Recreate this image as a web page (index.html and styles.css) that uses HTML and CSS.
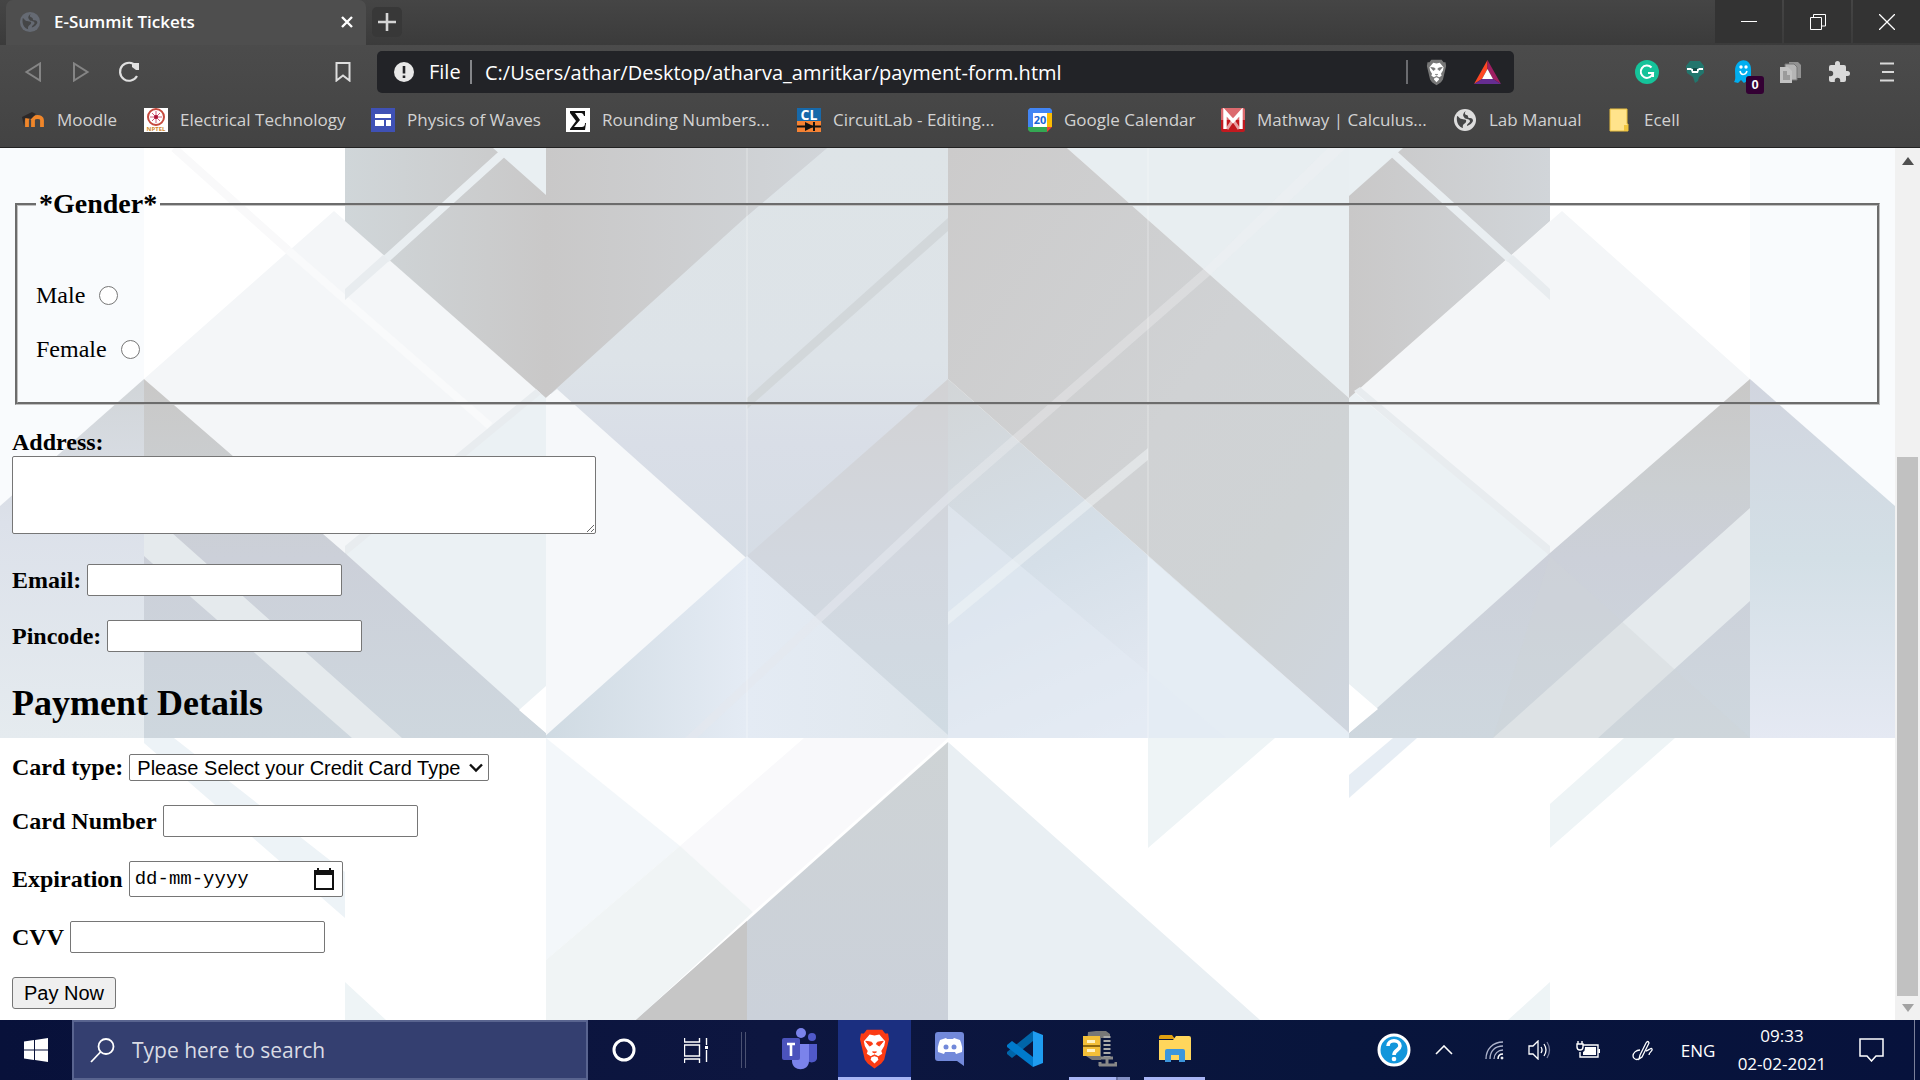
FILE: index.html
```html
<!DOCTYPE html>
<html lang="en">
<head>
<meta charset="utf-8">
<title>E-Summit Tickets</title>
<link rel="stylesheet" href="styles.css">
</head>
<body>
<svg class="defs" aria-hidden="true">
  <symbol id="globe" viewBox="0 0 24 24"><circle cx="12" cy="12" r="11" fill="currentColor"/><path d="M4 8c2 0 2 3 5 3 3 1 5 0 4 3-1 2-4 2-3 6-4-1-7-5-6-12zM13 3c-2 2-1 4 1 4 2 1 0 3 3 3 2 0 3 1 3 3-1 2-3 4-6 5 0-3 3-3 3-5-1-3-5-1-6-4-2-2 0-5 2-6z" class="globe-land"/></symbol>
  <symbol id="lion" viewBox="0 0 32 42"><path d="M8 1h16l3 4 3 0 1 6-1 4-4 17-3 4-7 5-7-5-3-4L2 15l-1-4 1-6h3z" fill="currentColor"/><path d="M16 7l5-1 6 7-1 5-3 5 1 3-5 3 1 3-4 4-4-4 1-3-5-3 1-3-3-5-1-5 6-7z" fill="#fff"/><path d="M7 13l6 1 1 2-3 2zM25 13l-6 1-1 2 3 2zM14 24l2 1 2-1zM12 29l4-2 4 2-4-1z" fill="currentColor" stroke="currentColor" stroke-width="1"/></symbol>
</svg>

<header class="browser">
  <div class="tabstrip">
    <div class="tab">
      <svg class="tab-globe" viewBox="0 0 24 24"><use href="#globe"/></svg>
      <span class="tab-title">E-Summit Tickets</span>
      <button class="plain tab-close" aria-label="Close tab"><svg width="14" height="14" viewBox="0 0 14 14"><path d="M2 2l10 10M12 2L2 12" stroke="#fff" stroke-width="2.4"/></svg></button>
    </div>
    <button class="plain new-tab" aria-label="New tab"><svg width="20" height="20" viewBox="0 0 20 20"><path d="M10 1v18M1 10h18" stroke="#d5d5d5" stroke-width="2.6"/></svg></button>
    <div class="window-buttons">
      <button class="plain" aria-label="Minimise"><svg width="16" height="16" viewBox="0 0 16 16"><path d="M0 7.500h16" stroke="#fff"/></svg></button>
      <button class="plain" aria-label="Restore"><svg width="16" height="16" viewBox="0 0 16 16" fill="none" stroke="#fff"><path d="M.5 3.500h11v12h-11zM3.500 3V.500h12v11.500H12"/></svg></button>
      <button class="plain" aria-label="Close window"><svg width="16" height="16" viewBox="0 0 16 16"><path d="M0 0l16 16M16 0L0 16" stroke="#fff" stroke-width="1.300"/></svg></button>
    </div>
  </div>

  <div class="toolbar">
    <nav class="navigation">
      <button class="plain tool" aria-label="Back"><svg width="18" height="20" viewBox="0 0 18 20"><path d="M16 1.500v17L2.500 10z" fill="none" stroke="#858585" stroke-width="2"/></svg></button>
      <button class="plain tool" aria-label="Forward"><svg width="18" height="20" viewBox="0 0 18 20"><path d="M2 1.500v17L15.500 10z" fill="none" stroke="#858585" stroke-width="2"/></svg></button>
      <button class="plain tool" aria-label="Reload"><svg width="22" height="22" viewBox="0 0 22 22"><path d="M18 5A9 9 0 1 0 19 15" fill="none" stroke="#e0e0e0" stroke-width="2.200"/><path d="M14 2h7v7h-3l-4-3z" fill="#e0e0e0"/></svg></button>
      <button class="plain tool save" aria-label="Bookmark"><svg width="16" height="20" viewBox="0 0 16 20"><path d="M1.500 1h13v17.500L8 13.500l-6.500 5z" fill="none" stroke="#dedede" stroke-width="2"/></svg></button>
    </nav>
    <div class="address">
      <svg width="20" height="20" viewBox="0 0 20 20"><circle cx="10" cy="10" r="10" fill="#e8e8e8"/><path d="M10 4v7.500M10 13.500v2.500" stroke="#222327" stroke-width="2.600"/></svg>
      <span class="scheme">File</span>
      <input class="url" type="text" aria-label="Address bar" value="C:/Users/athar/Desktop/atharva_amritkar/payment-form.html">
      <span class="divider"></span>
      <button class="plain shield" aria-label="Shields"><svg width="23" height="27" viewBox="0 0 32 42"><use href="#lion"/></svg></button>
      <button class="plain rewards" aria-label="Rewards"><svg width="27" height="24" viewBox="0 0 27 24"><path d="M13.500 0L0 24l8-5 5.500-10z" fill="#ff4724"/><path d="M13.500 0L27 24l-8-5-5.500-10z" fill="#9e1f63"/><path d="M0 24h27l-8-5H8z" fill="#662d91"/><path d="M13.500 9L19 19H8z" fill="#fff"/></svg></button>
    </div>
    <div class="extensions">
      <button class="plain tool" aria-label="Grammar check"><svg width="24" height="24" viewBox="0 0 24 24"><circle cx="12" cy="12" r="12" fill="#15c39a"/><path d="M16.500 7.500A6.200 6.200 0 1 0 18 13h-5M18 12.500v4.500" fill="none" stroke="#fff" stroke-width="2"/></svg></button>
      <button class="plain tool" aria-label="Robot"><svg width="20" height="24" viewBox="0 0 20 24"><path d="M5 1h10l4 5v7l-5 4-1 4-3 2-2-6-6-4-1-7z" fill="#22766d"/><path d="M2 8h4l1 1h6l1-1h4v2h-4l-1 3H7l-1-3H2z" fill="#fff"/><path d="M8 8h4v3H8z" fill="#154d48"/></svg></button>
      <button class="plain tool ghost" aria-label="Tracker blocker, 0 blocked"><svg width="20" height="24" viewBox="0 0 20 24"><path d="M2 11C2-3 18-3 18 9v14l-4-2-3 2-3-3-3 3-4-1c2-3 1-7 1-11z" fill="#00aef0"/><circle cx="8" cy="7" r="1.700" fill="#fff"/><circle cx="13" cy="7" r="1.700" fill="#fff"/><path d="M7 11c1 5 6 4 7 0" fill="none" stroke="#fff" stroke-width="1.500"/></svg><span class="badge">0</span></button>
      <button class="plain tool" aria-label="Pages"><svg width="22" height="22" viewBox="0 0 22 22"><path d="M9 1h9l3 3v13H9z" fill="#929292"/><path d="M5 3h9l3 3v13H5z" fill="#b5b5b5" stroke="#777"/><path d="M0 6h8l4 4v12H0z" fill="#c2c2c2"/><path d="M3 10h4v4h3v5H3z" fill="#9b9b9b"/></svg></button>
      <button class="plain tool" aria-label="Extensions"><svg width="24" height="24" viewBox="0 0 24 24"><path d="M20.500 11H19V7a2 2 0 0 0-2-2h-4V3.500a2.500 2.500 0 0 0-5 0V5H4a2 2 0 0 0-2 2v3.800h1.500a2.700 2.700 0 0 1 0 5.400H2V20a2 2 0 0 0 2 2h3.800v-1.500a2.700 2.700 0 0 1 5.400 0V22H17a2 2 0 0 0 2-2v-4h1.500a2.500 2.500 0 0 0 0-5z" fill="#d9d9d9"/></svg></button>
      <button class="plain tool" aria-label="Menu"><svg width="14" height="20" viewBox="0 0 14 20"><path d="M0 1.500h14M2 10h12M0 18.500h14" stroke="#d9d9d9" stroke-width="2"/></svg></button>
    </div>
  </div>

  <nav class="bookmarks">
    <a href="#"><svg viewBox="0 0 24 24"><path d="M6 19v-7c0-4 6-4 6 0v7M12 12c0-4 9-4 9 0v7" fill="none" stroke="#f0862a" stroke-width="3.800"/><path d="M1 9l10-5 4 2-5 5-6-1-1 8z" fill="#2c2828"/></svg><span>Moodle</span></a>
    <a href="#"><svg viewBox="0 0 24 24"><path fill="#fff" d="M0 0h24v24H0z"/><circle cx="12" cy="9" r="8" fill="none" stroke="#c54a3e" stroke-width="2"/><path d="M12 3v12M6 9h12M8 5l8 8M16 5l-8 8" stroke="#cf5f7a"/><circle cx="12" cy="9" r="2" fill="#a13"/><text x="12" y="23" class="tiny nptel">NPTEL</text></svg><span>Electrical Technology</span></a>
    <a href="#"><svg viewBox="0 0 24 24"><path fill="#3f51b5" d="M0 0h24v24H0z"/><path d="M4 6h16v4H4zM4 12h9v6H4zM15 12h5v6h-5z" fill="#fff"/></svg><span>Physics of Waves</span></a>
    <a href="#"><svg viewBox="0 0 24 24"><path fill="#fff" d="M0 0h24v24H0z"/><path d="M4 3h15v5h-1c-1-3-2-3-4-3H9l5 7-6 7h7c3 0 4-1 4-4h1l-1 7H4v-1l6-8-6-8z" fill="#111"/></svg><span>Rounding Numbers...</span></a>
    <a href="#"><svg viewBox="0 0 24 24"><path fill="#1769aa" d="M0 0h24v13H0z"/><path fill="#f58233" d="M0 13h24v11H0z"/><text x="12" y="12" class="tiny circuit">CL</text><path d="M0 18.500h24M17 14v9" stroke="#111" stroke-width="2"/><path d="M8 14l9 4.500L8 23z" fill="#111"/></svg><span>CircuitLab - Editing...</span></a>
    <a href="#"><svg viewBox="0 0 24 24"><path fill="#4285f4" d="M2 0h20l2 2v18H0V2z"/><path fill="#fbbc04" d="M19 5h5v14h-5z"/><path fill="#34a853" d="M0 19h19v5H2l-2-2z"/><path fill="#444" d="M19 19h5v5h-5z"/><path fill="#ea4335" d="M19 19h5l-5 5z"/><path fill="#fff" d="M5 5h14v14H5z"/><text x="12" y="16" class="tiny day">20</text></svg><span>Google Calendar</span></a>
    <a href="#"><svg viewBox="0 0 24 24"><rect width="24" height="24" rx="2" fill="#c2191f"/><path d="M0 2q0-2 2-2h20q2 0 2 2v10H0z" fill="#dc6a6e"/><path d="M6 21l6-9 6 9" fill="none" stroke="#e8a0a2" stroke-width="3"/><path d="M4 21V4l8 9 8-9v17" fill="none" stroke="#fff" stroke-width="3.400"/></svg><span>Mathway | Calculus...</span></a>
    <a href="#" class="manual"><svg viewBox="0 0 24 24"><use href="#globe"/></svg><span>Lab Manual</span></a>
    <a href="#"><svg viewBox="0 0 24 24"><path d="M2 1h17v15h1v7H2z" fill="#ffe38b" stroke="#e9bf3f"/><path d="M16 17h4v6h-4z" fill="#f0c53d"/></svg><span>Ecell</span></a>
  </nav>
</header>

<div class="viewport">
  <main class="page">
    <svg class="backdrop" viewBox="0 148 1895 872" preserveAspectRatio="none" aria-hidden="true">
      <defs>
        <linearGradient id="g1"><stop offset="0" stop-color="#d0d6d9"/><stop offset="1" stop-color="#c9c8c8"/></linearGradient>
        <linearGradient id="g2"><stop offset="0" stop-color="#c9c8c8"/><stop offset="1" stop-color="#d1d5d9"/></linearGradient>
        <linearGradient id="g3" x2="0" y2="1"><stop offset="0" stop-color="#dee4e7"/><stop offset=".36" stop-color="#dde3e8"/><stop offset=".5" stop-color="#d9dee7"/><stop offset="1" stop-color="#d0dae2"/></linearGradient>
        <linearGradient id="g4" x2="0" y2="1"><stop offset="0" stop-color="#d2d2d4"/><stop offset=".5" stop-color="#d2d7df"/><stop offset="1" stop-color="#d0dbe3"/></linearGradient>
        <linearGradient id="g5" x2="1" y2="1"><stop offset="0" stop-color="#cccbcb"/><stop offset=".5" stop-color="#d0d2d4"/><stop offset=".75" stop-color="#cfd3d5"/><stop offset="1" stop-color="#cfd6df"/></linearGradient>
        <linearGradient id="g6" x2=".5" y2="1"><stop offset="0" stop-color="#d2d5d7"/><stop offset=".5" stop-color="#d5dfe8"/><stop offset="1" stop-color="#e6ebf4"/></linearGradient>
        <linearGradient id="g7"><stop offset="0" stop-color="#cfdae2"/><stop offset=".5" stop-color="#e4ebf4"/><stop offset="1" stop-color="#e0e7ed"/></linearGradient>
        <linearGradient id="g8" x2="0" y2="1"><stop offset="0" stop-color="#c9c8c7"/><stop offset=".3" stop-color="#cbcfd2"/><stop offset=".5" stop-color="#ccd0d9"/><stop offset="1" stop-color="#ced7de"/></linearGradient>
        <linearGradient id="g9" x2="0" y2="1"><stop offset="0" stop-color="#d1d5d8"/><stop offset=".4" stop-color="#dce1ea"/><stop offset="1" stop-color="#e5ebef"/></linearGradient>
        <linearGradient id="g10" x2="0" y2="1"><stop offset="0" stop-color="#d1d5df"/><stop offset=".5" stop-color="#d3dfe6"/><stop offset="1" stop-color="#e5e9f3"/></linearGradient>
        <linearGradient id="g11" x2="0" y2="1"><stop offset="0" stop-color="#ced3d5"/><stop offset="1" stop-color="#cbd1da"/></linearGradient>
      </defs>
      <path d="M0 148h1895v872H0z" fill="#fff"/>
      <path d="M0 148h144v231L0 506zM1750 148h145v358l-145-127z" fill="#f9fbfd"/>
      <path d="M334 211L144 379l201 174 201 180V398zM1562 211l188 168-200 174-201 180V398z" fill="#f4f6f8"/>
      <path d="M345 553l201-165v345zM1550 553l-201-165v345z" fill="#ebf1f4"/>
      <path d="M174 148l114 102" stroke="#f9f9fa" stroke-width="8"/>
      <path d="M288 250l202 176" stroke="#f9fafb" stroke-width="8"/>
      <path d="M345 148h201v250L345 221z" fill="url(#g1)"/>
      <path d="M1349 148h201v73l-201 177z" fill="url(#g2)"/>
      <path d="M493 148h53v47zM1403 148h-54v48z" fill="#e9eff2"/>
      <path d="M502 154L386 259M1394 154l116 105" stroke="#e9eef1" stroke-width="8"/>
      <path d="M383 255l-38 34v11l44-39zM1513 255l37 34v11l-43-39zM345 546v10l196-162-5-5zM1360 387l190 159v10L1354 391z" fill="#e8ecef"/>
      <path d="M546 148h402v590L546 390z" fill="url(#g3)"/>
      <path d="M747 148h80l-80 68z" fill="#d3d8e2"/>
      <path d="M546 148h281l-80 68-201 182z" fill="url(#g2)"/>
      <path d="M546 398l11-9 391 349H546z" fill="#f6f8fa"/>
      <path d="M948 379v359L747 556z" fill="url(#g4)"/>
      <path d="M747 556l201 179v3H543z" fill="url(#g7)"/>
      <path d="M948 218v13L747 409v-11z" fill="#d2d7da"/>
      <path d="M948 492v12L697 738h-12z" fill="#e4e8ee" opacity=".6"/>
      <path d="M1067 148h282v250z" fill="#e8eef1"/>
      <path d="M948 379l401 354v5H948z" fill="url(#g6)"/>
      <path d="M1148 556l201 178v4h-201z" fill="#e5edf4"/>
      <path d="M948 505l278 233H948z" fill="#e4ebf4" opacity=".55"/>
      <path d="M948 148h119l282 250v335L948 379z" fill="url(#g5)"/>
      <path d="M948 492l260-227 120-117h18L1208 277 948 504z" fill="#f0f2f3" opacity=".35"/>
      <path d="M1148 448v12L948 625v-13z" fill="#f2f5f7" opacity=".5"/>
      <path d="M1148 148v590M747 148v590" stroke="#fff" opacity=".2" stroke-width="2"/>
      <path d="M144 379L0 506v232h144z" fill="url(#g9)"/>
      <path d="M1750 379l145 127v232h-145z" fill="url(#g10)"/>
      <path d="M144 379l201 174 201 180v5H144zM1750 379l-200 174-201 180v5h401z" fill="url(#g8)"/>
      <path d="M144 508l258 230h-50L144 556zM1750 508l-257 230h105l152-137z" fill="#e5eaed"/>
      <path d="M1550 556l200 182h-257z" fill="#cfd3d6" opacity=".35"/>
      <path d="M546 686l-27 24 27 23zM1349 684l29 25-29 24z" fill="#fff"/>
      <path d="M144 738h30l171 134v46L144 743z" fill="#edf3f7"/>
      <path d="M546 738l134 108-134 114z" fill="#f3f7fa"/>
      <path d="M804 738h144L753 912l-73-66z" fill="#f9f9fb"/>
      <path d="M680 846l73 66-117 108h-90v-60z" fill="#f0f4f5"/>
      <path d="M948 742v278H636z" fill="url(#g11)"/>
      <path d="M747 921v99H636z" fill="#c6c6c6"/>
      <path d="M948 742l312 278H948z" fill="#e9eff3"/>
      <path d="M1148 738h127l-127 110zM1550 804l74-66h51l-125 110zM345 982v38h41zM1550 982v38h-42z" fill="#eef4f6"/>
      <path d="M1349 775l44-37h24l-68 60z" fill="#e6edf4"/>
    </svg>

    <form class="form" onsubmit="return false">
      <fieldset class="gender">
        <legend>*Gender*</legend>
        <div class="option"><label for="male">Male</label><input type="radio" id="male" name="gender"></div>
        <div class="option"><label for="female">Female</label><input type="radio" id="female" name="gender"></div>
      </fieldset>
      <div class="field stacked"><label for="address">Address:</label><textarea id="address"></textarea></div>
      <div class="fields">
        <div class="field"><label for="email">Email:</label><input class="box" type="text" id="email"></div>
        <div class="field"><label for="pincode">Pincode:</label><input class="box" type="text" id="pincode"></div>
      </div>
      <h2>Payment Details</h2>
      <div class="fields">
        <div class="field"><label for="type">Card type:</label>
          <span class="select-wrap"><select id="type"><option>Please Select your Credit Card Type</option></select><svg width="16" height="10" viewBox="0 0 16 10"><path d="M2 1.500l6 6 6-6" fill="none" stroke="#111" stroke-width="2.400"/></svg></span></div>
        <div class="field"><label for="number">Card Number</label><input class="box" type="text" id="number"></div>
        <div class="field"><label for="expiry">Expiration</label>
          <span class="date"><input type="text" id="expiry" placeholder="dd-mm-yyyy"><button class="plain" type="button" aria-label="Open calendar"><svg width="20" height="22" viewBox="0 0 20 22"><path d="M0 2h3V0h2v2h10V0h2v2h3v20H0zM2 7v13h16V7z" fill="#111" fill-rule="evenodd"/></svg></button></span></div>
        <div class="field"><label for="cvv">CVV</label><input class="box" type="text" id="cvv"></div>
        <div class="field"><button class="pay" type="submit">Pay Now</button></div>
      </div>
    </form>
  </main>
  <div class="scrollbar" aria-hidden="true">
    <svg width="12" height="8" viewBox="0 0 12 8"><path d="M6 0l6 8H0z" fill="#505050"/></svg>
    <div class="track"><div class="thumb"></div></div>
    <svg width="12" height="8" viewBox="0 0 12 8"><path d="M0 0h12L6 8z" fill="#a3a3a3"/></svg>
  </div>
</div>

<footer class="taskbar">
  <button class="plain start" aria-label="Start"><svg width="24" height="24" viewBox="0 0 24 24"><path d="M0 3.500l10-1.500v9.500H0zM11 2l13-2v11.500H11zM0 12.500h10V22L0 20.500zM11 12.500h13V24l-13-2z" fill="#fff"/></svg></button>
  <label class="search"><svg width="25" height="25" viewBox="0 0 25 25"><circle cx="16" cy="8.500" r="7.500" fill="none" stroke="#fff" stroke-width="1.800"/><path d="M10.500 14L1 24" stroke="#fff" stroke-width="1.800"/></svg><input type="text" placeholder="Type here to search" aria-label="Type here to search"></label>
  <button class="plain start" aria-label="Cortana"><svg width="24" height="24" viewBox="0 0 24 24"><circle cx="12" cy="12" r="10" fill="none" stroke="#fff" stroke-width="3"/></svg></button>
  <button class="plain start" aria-label="Task view"><svg width="25" height="25" viewBox="0 0 25 25"><path d="M.5 0v4h15V0M.5 7h15v11H.500zM.500 25v-4h15v4M22.500 0v7M22.500 12v12" fill="none" stroke="#fff" stroke-width="1.400"/><path d="M21 8h3v3h-3z" fill="#fff"/></svg></button>
  <div class="apps">
    <button class="plain app" aria-label="Teams"><svg width="36" height="42" viewBox="0 0 36 42"><circle cx="19" cy="5" r="5" fill="#7b83eb"/><circle cx="30" cy="9" r="4" fill="#5059c9"/><path d="M24 16h11v14c0 4-6 6-9 3z" fill="#5059c9"/><path d="M10 16h17v17c0 11-17 11-17 0z" fill="#7b83eb"/><rect y="10" width="18" height="22" rx="2" fill="#4b53bc"/><path d="M5 16h8M9 16v12" stroke="#fff" stroke-width="2.600"/></svg></button>
    <button class="plain app active" aria-label="Brave"><svg class="brave" width="31" height="42" viewBox="0 0 32 42"><use href="#lion"/></svg></button>
    <button class="plain app" aria-label="Discord"><svg width="30" height="34" viewBox="0 0 30 34"><path d="M3 0h23q3 0 3 3v31l-7-5H3q-3 0-3-3V3q0-3 3-3z" fill="#7289da"/><path d="M5 8l6-2 1 1h6l1-1 6 2q3 7 2 12l-6 2-1-2h-10l-1 2-6-2q-1-5 2-12z" fill="#fff"/><circle cx="11" cy="15" r="2.500" fill="#7289da"/><circle cx="19" cy="15" r="2.500" fill="#7289da"/></svg></button>
    <button class="plain app" aria-label="Visual Studio Code"><svg width="36" height="36" viewBox="0 0 36 36"><path d="M26 0v10L5 27l-5-4v-2z" fill="#0065a9"/><path d="M0 14l5-4 21 16v10L0 16z" fill="#007acc"/><path d="M26 0l10 4v28l-10 4z" fill="#1f9cf0"/></svg></button>
    <button class="plain app running grouped" aria-label="WinZip"><svg width="34" height="36" viewBox="0 0 34 36"><path d="M5 1l8-1h10l4 3v4h-9v22H9l-6-4z" fill="#777"/><path d="M0 5h17v20H0z" fill="#f3bf38"/><path d="M0 15h17" stroke="#8c6811" stroke-width="2"/><path d="M4 9h8v3H4zM4 18h8v3H4z" fill="#fff1c0"/><path d="M24 5v22" stroke="#aaa" stroke-width="7" stroke-dasharray="2 2"/><path d="M18 27h12M24 26v9M16 34h18M17 31v4M33 31v4" stroke="#888" stroke-width="3"/></svg></button>
    <button class="plain app running" aria-label="File Explorer"><svg width="32" height="27" viewBox="0 0 32 27"><path d="M0 2q0-2 2-2h11l3 4H0z" fill="#e0a010"/><path d="M0 5h14l3-4h13q2 0 2 2v22H0z" fill="#ffd65c"/><path d="M6 16q0-2 2-2h16q2 0 2 2v11h-6v-7h-8v7H6z" fill="#3c96dc"/></svg></button>
  </div>
  <div class="tray">
    <svg width="34" height="34" viewBox="0 0 34 34"><circle cx="17" cy="17" r="15" fill="#1296db" stroke="#fff" stroke-width="3"/><path d="M11 13c0-7 12-7 12 0 0 4-6 4-6 9" fill="none" stroke="#fff" stroke-width="3.600"/><circle cx="17" cy="26" r="2.300" fill="#fff"/></svg>
    <svg width="18" height="10" viewBox="0 0 18 10"><path d="M1 9l8-8 8 8" fill="none" stroke="#fff" stroke-width="1.600"/></svg>
    <svg width="19" height="19" viewBox="0 0 19 19" fill="none" stroke="#fff"><path d="M1 18C1 8 8 1 18 1M5 18C5 10 10 5 18 5M9 18c0-5 4-9 9-9" stroke="#aeb4cb" stroke-width="1.300"/><path d="M13 18c0-3 2-5 5-5" stroke-width="1.500"/><circle cx="17" cy="17" r="1" fill="#fff"/></svg>
    <svg width="23" height="20" viewBox="0 0 23 20" fill="none" stroke="#fff" stroke-width="1.300"><path d="M1 6h4l5-5v18l-5-5H1zM13 7q2 3 0 6M16 4q4 6 0 12"/><path d="M19 2q5 8 0 16" stroke="#737a99"/></svg>
    <svg width="24" height="18" viewBox="0 0 24 18" fill="none" stroke="#fff" stroke-width="1.400"><path d="M7 4h15v12H4v-5M23.500 8v4M2 0v3M6 0v3M1 3h6v3q0 3-3 3T1 6z"/><path d="M9 6h11v8H7v-3q2-1 2-4z" fill="#fff" stroke="none"/></svg>
    <svg width="21" height="21" viewBox="0 0 21 21" fill="none" stroke="#fff" stroke-width="1.300"><path d="M8 15L14 3q2-3 3 0l-7 14-3 2zM8 10c-4 0-7 3-7 6s4 5 7 2M14 11c2 0 5-4 6-2s-3 3-3 6"/></svg>
    <span class="lang">ENG</span>
    <time class="clock" datetime="2021-02-02T09:33"><span>09:33</span><span>02-02-2021</span></time>
    <svg width="25" height="24" viewBox="0 0 25 24"><path d="M1 1h23v17h-7l-4.500 5L8 18H1z" fill="none" stroke="#fff" stroke-width="1.500"/></svg>
    <span class="desktop-edge"></span>
  </div>
</footer>
</body>
</html>
```
FILE: styles.css
```css
* {
  box-sizing: border-box;
}

body {
  margin: 0;
  min-height: 100vh;
  display: flex;
  flex-direction: column;
  font-family: "Open Sans", "Noto Sans", sans-serif;
}

.defs {
  position: absolute;
  width: 0;
  height: 0;
}

.plain {
  display: flex;
  align-items: center;
  justify-content: center;
  padding: 0;
  border: 0;
  background: none;
}

svg {
  flex: none;
}

/* Browser window */

.browser {
  background: linear-gradient(#4f4f4f, #434343);
  border-bottom: 1px solid #222;
  color: #fff;
}

.tabstrip {
  display: flex;
  height: 45px;
  padding-left: 6px;
  background: linear-gradient(#454545, #3b3b3b);
}

.tab {
  display: flex;
  align-items: center;
  width: 360px;
  padding: 0 12px 2px 13px;
  border-radius: 7px 7px 0 0;
  background: #4e4e4e;
}

.tab-globe {
  width: 22px;
  height: 22px;
  color: #656a73;
}

.globe-land {
  fill: #454647;
}

.tab-title {
  margin-left: 13px;
  font-size: 17px;
  font-weight: 600;
}

.tab-close {
  margin-left: auto;
}

.new-tab {
  width: 30px;
  height: 30px;
  margin: 7px 0 0 6px;
  border-radius: 5px;
  background: #383838;
}

.window-buttons {
  display: flex;
  gap: 2px;
  height: 43px;
  margin-left: auto;
}

.window-buttons .plain {
  width: 67px;
  background: #333;
}

.toolbar {
  display: flex;
  align-items: center;
  height: 54px;
}

.navigation {
  display: flex;
  width: 377px;
  padding: 0 10px 0 9px;
}

.tool {
  width: 48px;
  height: 42px;
}

.save {
  margin-left: auto;
}

.address {
  display: flex;
  flex: 1;
  align-items: center;
  height: 42px;
  padding: 0 13px 0 17px;
  border-radius: 5px;
  background: #222327;
  font-size: 20px;
}

.scheme {
  width: 43px;
  margin-left: 15px;
  border-right: 2px solid #85868a;
  line-height: 24px;
}

.url {
  flex: 1;
  min-width: 0;
  height: 32px;
  padding: 0 0 0 13px;
  border: 0;
  background: none;
  color: #fff;
  font: inherit;
}

.divider {
  width: 2px;
  height: 24px;
  margin-right: 17px;
  background: #6b6c70;
}

.shield {
  color: #777;
}

.rewards {
  margin-left: 26px;
}

.extensions {
  display: flex;
  justify-content: flex-end;
  width: 406px;
  padding-right: 9px;
}

.ghost {
  position: relative;
}

.badge {
  position: absolute;
  right: 3px;
  bottom: -1px;
  width: 18px;
  border-radius: 3px;
  background: #330033;
  color: #fff;
  font-size: 13px;
  font-weight: 700;
  line-height: 18px;
}

.bookmarks {
  display: grid;
  grid-template-columns: 123px 227px 195px 231px 231px 193px 232px 155px 1fr;
  height: 48px;
  padding: 0 0 7px 21px;
}

.bookmarks a {
  display: flex;
  gap: 12px;
  align-items: center;
  color: #d2d2d2;
  font-size: 17px;
  text-decoration: none;
  white-space: nowrap;
}

.bookmarks svg {
  width: 24px;
  height: 24px;
}

.manual svg {
  color: #ddd;
}

.tiny {
  font-weight: 700;
  text-anchor: middle;
}

.nptel {
  font-size: 6px;
  fill: #d1872c;
}

.circuit {
  font-size: 14px;
  fill: #fff;
}

.day {
  font-size: 11px;
  fill: #1a66d6;
}

/* Web page */

.viewport {
  display: flex;
  flex: 1;
}

.page {
  position: relative;
  flex: 1;
  font-family: "Liberation Serif", "Times New Roman", serif;
  font-size: 24px;
  line-height: 27px;
}

.backdrop {
  position: absolute;
  inset: 0;
  width: 100%;
  height: 100%;
}

.form {
  position: relative;
  padding: 40px 12px 11px;
}

.gender {
  margin: 0 3px 24px;
  padding: 62px 18px 39px;
  border: 3px groove #c0c0c0;
}

.gender legend {
  padding: 0 3px;
  font-size: 28px;
  font-weight: 700;
  line-height: 32px;
}

.option {
  display: flex;
  gap: 14px;
  align-items: center;
}

.option + .option {
  margin-top: 27px;
}

.option input {
  width: 19px;
  height: 19px;
  margin: 0;
}

.field {
  display: flex;
  gap: 6px;
  align-items: center;
}

.field label {
  font-weight: 700;
}

.stacked {
  flex-direction: column;
  gap: 0;
  align-items: flex-start;
  margin-bottom: 30px;
}

textarea,
.box,
.date,
select {
  border: 1px solid #767676;
  border-radius: 2px;
  background: #fff;
  color: #000;
}

textarea {
  display: block;
  width: 584px;
  height: 78px;
}

.fields {
  display: flex;
  flex-direction: column;
  gap: 24px;
}

.box {
  width: 255px;
  height: 32px;
}

h2 {
  margin: 30px 0;
  font-size: 36px;
  line-height: 42px;
}

.select-wrap {
  display: grid;
  align-items: center;
}

.select-wrap > * {
  grid-area: 1 / 1;
}

.select-wrap svg {
  justify-self: end;
  margin-right: 5px;
  pointer-events: none;
}

select {
  width: 360px;
  height: 27px;
  padding: 0 0 0 7px;
  appearance: none;
  font: 20px "Liberation Sans", Arial, sans-serif;
}

.date {
  display: flex;
  align-items: center;
  width: 214px;
  height: 36px;
  padding: 0 8px 0 5px;
}

.date input {
  flex: 1;
  min-width: 0;
  padding: 0;
  border: 0;
  background: none;
  font: 19px "Liberation Mono", "Courier New", monospace;
}

.date input::placeholder {
  color: #000;
}

.pay {
  width: 104px;
  height: 32px;
  padding: 0;
  border: 1px solid #767676;
  border-radius: 3px;
  background: #efefef;
  color: #000;
  font: 20px "Liberation Sans", Arial, sans-serif;
}

.scrollbar {
  display: flex;
  flex-direction: column;
  align-items: center;
  width: 25px;
  padding: 9px 0 8px;
  background: #f1f1f1;
}

.track {
  display: flex;
  flex: 1;
  flex-direction: column;
  justify-content: flex-end;
  margin: 8px 0;
}

.thumb {
  width: 21px;
  height: 65.5%;
  background: #c1c1c1;
}

/* Taskbar */

.taskbar {
  display: flex;
  height: 60px;
  background: linear-gradient(90deg, #08113a, #0d1640 40%, #08153c 70%, #07123c);
  color: #fff;
}

.start {
  width: 72px;
}

.search {
  display: flex;
  align-items: center;
  gap: 17px;
  width: 516px;
  padding-left: 16px;
  border: 2px solid #59648f;
  background: #343f70;
}

.search input {
  flex: 1;
  min-width: 0;
  padding: 0;
  border: 0;
  background: none;
  color: #fff;
  font: 21px "Open Sans", "Noto Sans", sans-serif;
}

.search input::placeholder {
  color: #d9dbe4;
}

.apps {
  display: flex;
  gap: 2px;
  padding-left: 22px;
  margin-left: 9px;
  background: linear-gradient(90deg, #4b5272 1px, transparent 1px 4px, #4b5272 4px 5px, transparent 5px) 0 12px / 100% 36px no-repeat;
}

.app {
  width: 73px;
  border-bottom: 3px solid transparent;
}

.active {
  border-color: #a8b5f5;
  background: #1b2f80;
}

.brave {
  color: #fb3b14;
}

.running {
  background: linear-gradient(#a8b5f5, #a8b5f5) center bottom / 61px 3px no-repeat border-box;
}

.grouped {
  background: linear-gradient(90deg, #a8b5f5 47px, #6873a5 47px 49px, #8390c4 49px) center bottom / 61px 3px no-repeat border-box;
}

.tray {
  display: grid;
  grid-template-columns: 64px 36px 64px 26px 72px 36px 76px 92px 86px 6px;
  grid-template-rows: 60px;
  place-items: center;
  margin-left: auto;
  font-size: 17px;
}

.clock {
  display: flex;
  flex-direction: column;
  align-items: center;
  line-height: 28px;
  white-space: nowrap;
}

.desktop-edge {
  width: 6px;
  height: 60px;
  border-left: 1px solid #7b809a;
}
```
